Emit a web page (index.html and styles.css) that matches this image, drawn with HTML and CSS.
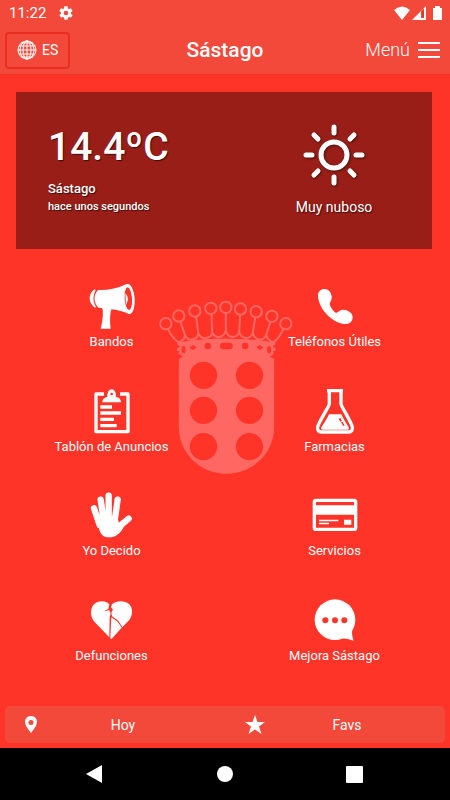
FILE: index.html
```html
<!DOCTYPE html>
<html lang="es">
<head>
    <meta charset="UTF-8">
    <meta name="viewport" content="width=device-width, initial-scale=1.0">
    <title>Sástago</title>
    <link rel="stylesheet" href="styles.css">
</head>
<body>
    <header class="top">
        <div class="status">
            <span class="clock">11:22</span>
            <svg class="gear" viewBox="0 0 24 24"><path d="M19.4 13c0-.3.1-.6.1-1s0-.7-.1-1l2.100-1.600c.2-.2.2-.4.100-.6l-2-3.500c-.1-.2-.4-.3-.6-.2l-2.500 1c-.5-.4-1.100-.7-1.700-1l-.4-2.600c0-.2-.2-.5-.5-.5h-4c-.2 0-.4.200-.5.500l-.4 2.600c-.6.300-1.200.600-1.700 1l-2.500-1c-.2-.1-.5 0-.6.200l-2 3.500c-.1.200 0 .5.100.6L4.500 11c0 .3-.1.700-.1 1s0 .7.100 1l-2.100 1.600c-.2.200-.2.400-.1.600l2 3.500c.1.200.4.300.6.200l2.500-1c.5.400 1.100.7 1.700 1l.4 2.600c0 .2.200.5.500.5h4c.2 0 .5-.2.500-.5l.4-2.600c.6-.3 1.200-.6 1.700-1l2.500 1c.2.100.5 0 .6-.2l2-3.500c.1-.2.100-.5-.1-.6L19.400 13zM12 15.500a3.500 3.500 0 1 1 0-7 3.500 3.500 0 0 1 0 7z"/></svg>
            <svg class="signals" viewBox="0 0 48 16">
                <path d="M0 5Q8-2 16 5L8 15z"/>
                <path d="M18 15L32 1V15z"/>
                <path class="signal-gap" d="M27 6l3-3v10h-3z"/>
                <path class="signal-bar" d="M29 6v6"/>
                <path d="M39 3h2V1h5v2h2v12h-9z"/>
            </svg>
        </div>
        <div class="toolbar">
            <button class="lang">
                <svg class="globe" viewBox="0 0 20 20"><circle cx="10" cy="10" r="9"/><ellipse cx="10" cy="10" rx="4" ry="9"/><ellipse cx="10" cy="10" rx="7" ry="9"/><path d="M10 1v18M1 10h18M2 6h16M2 14h16M4 3h12M4 17h12"/></svg>
                ES
            </button>
            <h1>Sástago</h1>
            <button class="menu">
                Menú
                <svg viewBox="0 0 22 16"><path d="M0 1h22M0 8h22M0 15h22"/></svg>
            </button>
        </div>
    </header>

    <main>
        <section class="weather">
            <div>
                <div class="temp">14.4ºC</div>
                <div class="town">Sástago</div>
                <div class="ago">hace unos segundos</div>
            </div>
            <div class="sky">
                <svg class="sun" viewBox="0 0 62 62">
                    <circle cx="31" cy="31" r="13"/>
                    <path d="M31 3v6M31 53v6M3 31h6M53 31h6M11 11l4 4M47 47l4 4M51 11l-4 4M15 47l-4 4"/>
                </svg>
                <span>Muy nuboso</span>
            </div>
        </section>

        <section class="services">
            <svg class="crest" viewBox="23 30 405 525">
                <g class="crown">
                    <circle cx="48" cy="101" r="17"/><circle cx="87" cy="78" r="17"/><circle cx="135" cy="63" r="17"/>
                    <circle cx="183" cy="55" r="17"/><circle cx="228" cy="52" r="17"/><circle cx="272" cy="57" r="17"/>
                    <circle cx="319" cy="65" r="17"/><circle cx="366" cy="79" r="17"/><circle cx="408" cy="101" r="17"/>
                    <path d="M54 117Q68 145 86 157Q106 150 105 134L92 95M105 134Q112 151 126 149Q147 144 145 128L139 80M145 128Q152 147 168 144Q188 140 187 126L185 72M187 126Q194 143 208 141Q226 137 228 122V70M228 122Q231 138 247 141Q263 141 268 126L271 74M268 126Q272 142 288 144Q306 144 309 128L316 82M309 128Q313 147 329 149Q345 148 349 134L362 96M349 134Q353 153 371 157Q386 147 401 117"/>
                </g>
                <path d="M81 158Q228 133 377 158L374 170Q382 179 373 189L367 195 373 207V410C373 490 308 551 230 551S87 490 87 410V207L94 196 84 190Q77 180 85 170z"/>
                <g class="holes">
                    <circle cx="161" cy="256" r="41"/><circle cx="299" cy="256" r="41"/>
                    <circle cx="161" cy="361" r="41"/><circle cx="299" cy="361" r="41"/>
                    <circle cx="161" cy="470" r="41"/><circle cx="299" cy="470" r="41"/>
                    <rect x="210" y="158" width="39" height="20" rx="10"/>
                    <circle cx="174" cy="168" r="10"/><circle cx="286" cy="168" r="10"/>
                    <path d="M118 173l12-8 11 6-11 9zM319 171l11-6 11 8-11 7z"/>
                    <ellipse cx="101" cy="179" rx="6" ry="11"/><ellipse cx="358" cy="179" rx="6" ry="11"/>
                    <path d="M81 166l9 1-1 6-9-1zM370 166l9 0v6l-8 1zM80 183h8v5h-8zM370 183h8v5h-8zM85 194l15 5-13 8zM374 194l-15 5 14 8z"/>
                </g>
            </svg>

            <a class="tile" href="#">
                <svg viewBox="142 24 144 144">
                    <path d="M172 45Q220 46 258 27L269 118Q235 102 173 98C158 82 158 60 172 45z"/>
                    <path d="M161 43Q147 54 147 70T162 98L166 96Q151 71 165 45z"/>
                    <path d="M184 94l29 6Q205 125 210 161H180Q191 120 184 94z"/>
                    <ellipse cx="264" cy="72" rx="18" ry="45" transform="rotate(-4 264 72)"/>
                    <ellipse class="cut" cx="263" cy="71" rx="11" ry="34" transform="rotate(-4 263 71)"/>
                    <path d="M254 55q14 15 2 34z"/>
                </svg>
                Bandos
            </a>
            <a class="tile" href="#">
                <svg viewBox="106 24 144 144">
                    <path d="M147 42C135 42 126 50 127 64C129 100 165 141 205 147C222 149 231 139 231 125C230 112 215 104 201 104C192 105 188 112 181 114C172 108 165 98 162 88C163 80 169 76 168 65C167 52 158 42 147 42z"/>
                </svg>
                Teléfonos Útiles
            </a>
            <a class="tile" href="#">
                <svg viewBox="144 338 144 144">
                    <path class="line" d="M192 356h-24v113h96V356h-24"/>
                    <path d="M187 381q0-14 15-16 0-23 13-23t13 23q15 2 15 16z"/>
                    <circle class="cut" cx="215" cy="356" r="4"/>
                    <path d="M181 390h35v10h-35zM181 408h62v10h-62zM181 427h41v10h-41zM181 446h49v10h-49z"/>
                </svg>
                Tablón de Anuncios
            </a>
            <a class="tile" href="#">
                <svg viewBox="108 338 144 144">
                    <path class="line" d="M156 346h48M163 346v40c0 6-32 54-35 69-2 9 3 15 11 15h82c8 0 13-6 11-15-3-15-34-63-34-69v-40"/>
                    <path d="M162 417h37q5 12 22 39 3 7-4 7h-74q-7 0-4-7 18-27 23-39z"/>
                    <path class="cut" d="M191 430l5-2 5 9-5 2zM198 441l4-2 7 11-4 2z"/>
                </svg>
                Farmacias
            </a>
            <a class="tile" href="#">
                <svg viewBox="144 37 144 144">
                    <path class="finger" d="M162 86l17 50M182 60l10 70M206 48v80M233 60l-10 70M266 117l-34 28"/>
                    <path d="M169 106l62 4 6 20 20-7-7 21C240 162 226 173 207 173C182 173 177 157 169 106z"/>
                </svg>
                Yo Decido
            </a>
            <a class="tile" href="#">
                <svg viewBox="108 37 144 144">
                    <rect class="line" x="118" y="62" width="124" height="87" rx="5"/>
                    <path d="M122 77h115v28H122zM132 120h58v5h-58zM132 129h30v5h-30zM207 120h22v15h-22z"/>
                </svg>
                Servicios
            </a>
            <a class="tile" href="#">
                <svg viewBox="144 350 144 144">
                    <path d="M208 471L163 424C149 408 151 383 162 372C174 360 198 360 208 372L205 386 191 393 208 390 212 400 209 410z"/>
                    <path d="M216 372C228 360 253 359 267 371C278 381 280 402 268 419L247 441 235 421 216 408 214 396 219 388 213 381z"/>
                    <path d="M214 411l19 13 12 18-31 35-3-4z"/>
                </svg>
                Defunciones
            </a>
            <a class="tile" href="#">
                <svg viewBox="108 350 144 144">
                    <circle cx="180" cy="418" r="61"/>
                    <path d="M201 474Q218 475 236 481 229 465 232 446z"/>
                    <g class="cut"><circle cx="151" cy="420" r="9"/><circle cx="180" cy="420" r="9"/><circle cx="208" cy="420" r="9"/></g>
                </svg>
                Mejora Sástago
            </a>
        </section>

        <nav class="tabs">
            <a href="#">
                <svg viewBox="0 0 20 20"><path fill-rule="evenodd" d="M10 1C6 1 4 4 4 7c0 4 6 11 6 11s6-7 6-11c0-3-2-6-6-6zm0 4a2.500 2.500 0 1 1 0 5 2.500 2.500 0 0 1 0-5z"/></svg>
                <span>Hoy</span>
            </a>
            <a href="#">
                <svg viewBox="0 0 20 20"><path d="M10 0l2.500 7H20l-6 4.500L16.500 19 10 14.500 3.500 19 6 11.500 0 7h7.500z"/></svg>
                <span>Favs</span>
            </a>
        </nav>
    </main>

    <footer class="system">
        <button aria-label="Atrás"><svg viewBox="0 0 18 18"><path d="M0 9L16 0V18z"/></svg></button>
        <button aria-label="Inicio"><svg viewBox="0 0 18 18"><circle cx="9" cy="9" r="8"/></svg></button>
        <button aria-label="Recientes"><svg viewBox="0 0 18 18"><rect x="0" y="1" width="17" height="17" rx="1"/></svg></button>
    </footer>
</body>
</html>
```
FILE: styles.css
```css
* {
    box-sizing: border-box;
}
body {
    margin: 0;
    min-height: 100vh;
    display: flex;
    flex-direction: column;
    font-family: Roboto, sans-serif;
    font-size: 14px;
    line-height: 18px;
    color: #fff;
    background-color: #ff3429;
}
button {
    font: inherit;
    color: inherit;
    background: none;
    border: none;
    padding: 0;
    cursor: pointer;
}
a {
    color: inherit;
    text-decoration: none;
}
svg {
    display: block;
    fill: #fff;
}
.top {
    background-color: #f2493b;
    border-bottom: 1px solid #f23328;
}
.status {
    display: flex;
    align-items: center;
    height: 26px;
    padding: 0 8px 0 9px;
}
.clock {
    font-size: 15px;
}
.gear {
    width: 16px;
    height: 16px;
    margin-left: 12px;
}
.signals {
    width: 48px;
    height: 16px;
    margin-left: auto;
}
.signal-gap {
    fill: #f2493b;
}
.signal-bar {
    stroke: #e01b12;
    stroke-width: 1;
}
.toolbar {
    display: grid;
    grid-template-columns: 1fr auto 1fr;
    align-items: center;
    height: 48px;
    padding: 0 10px;
}
.lang {
    display: flex;
    align-items: center;
    justify-self: start;
    gap: 5px;
    height: 37px;
    margin-left: -5px;
    padding: 0 10px;
    border: 2px solid #ea2e22;
    border-radius: 4px;
}
.globe {
    width: 20px;
    height: 20px;
    fill: none;
    stroke: #fff;
    stroke-width: 1;
}
.toolbar h1 {
    margin: 0;
    font-size: 21px;
    font-weight: 500;
    line-height: 24px;
}
.menu {
    display: flex;
    align-items: center;
    justify-self: end;
    gap: 8px;
    font-size: 18px;
    font-weight: 300;
}
.menu svg {
    width: 22px;
    height: 16px;
    stroke: #fff;
    stroke-width: 2;
}
main {
    flex: 1;
    display: flex;
    flex-direction: column;
    padding-bottom: 5px;
}
.weather {
    display: flex;
    justify-content: space-between;
    margin: 17px 18px 0 16px;
    padding: 32px 0 33px 32px;
    background-color: #981e17;
    text-shadow: 1px 1px 1px rgba(0, 0, 0, 0.6);
}
.temp {
    font-size: 39px;
    font-weight: 500;
    line-height: 46px;
    margin-bottom: 10px;
}
.town {
    font-size: 13px;
    font-weight: 500;
}
.ago {
    font-size: 11px;
    font-weight: 500;
}
.sky {
    width: 51%;
    display: flex;
    flex-direction: column;
    align-items: center;
    gap: 12px;
}
.sun {
    width: 62px;
    height: 62px;
    fill: none;
    stroke: #fff;
    stroke-width: 5;
    stroke-linecap: round;
    filter: drop-shadow(1px 1px 1px rgba(0, 0, 0, 0.5));
}
.services {
    position: relative;
    flex: 1;
    display: grid;
    grid-template-columns: 1fr 1fr;
    grid-template-rows: repeat(4, 1fr);
    padding: 16px 4px 23px 0;
    font-size: 13px;
}
.crest {
    position: absolute;
    top: 51px;
    left: 50%;
    width: 135px;
    height: 175px;
    transform: translateX(-50%);
    fill: #ff6862;
}
.crown {
    fill: none;
    stroke: #ff6862;
    stroke-width: 6;
}
.holes,
.cut {
    fill: #ff3429;
}
.tile {
    position: relative;
    display: flex;
    flex-direction: column;
    align-items: center;
    justify-content: center;
    gap: 2px;
}
.tile svg {
    width: 48px;
    height: 48px;
}
.line {
    fill: none;
    stroke: #fff;
    stroke-width: 10;
    stroke-linejoin: round;
}
.finger {
    fill: none;
    stroke: #fff;
    stroke-width: 19;
    stroke-linecap: round;
}
.tabs {
    display: grid;
    grid-template-columns: 1fr 1fr;
    gap: 8px;
    margin: 0 5px;
    background-color: #f2493b;
    border-radius: 5px;
}
.tabs a {
    display: flex;
    align-items: center;
    height: 37px;
    padding: 0 16px;
}
.tabs svg {
    width: 20px;
    height: 20px;
}
.tabs span {
    flex: 1;
    text-align: center;
}
.system {
    display: flex;
    height: 52px;
    padding: 0 30px;
    background-color: #000;
}
.system button {
    flex: 1;
    display: flex;
    align-items: center;
    justify-content: center;
}
.system svg {
    width: 18px;
    height: 18px;
}
```
